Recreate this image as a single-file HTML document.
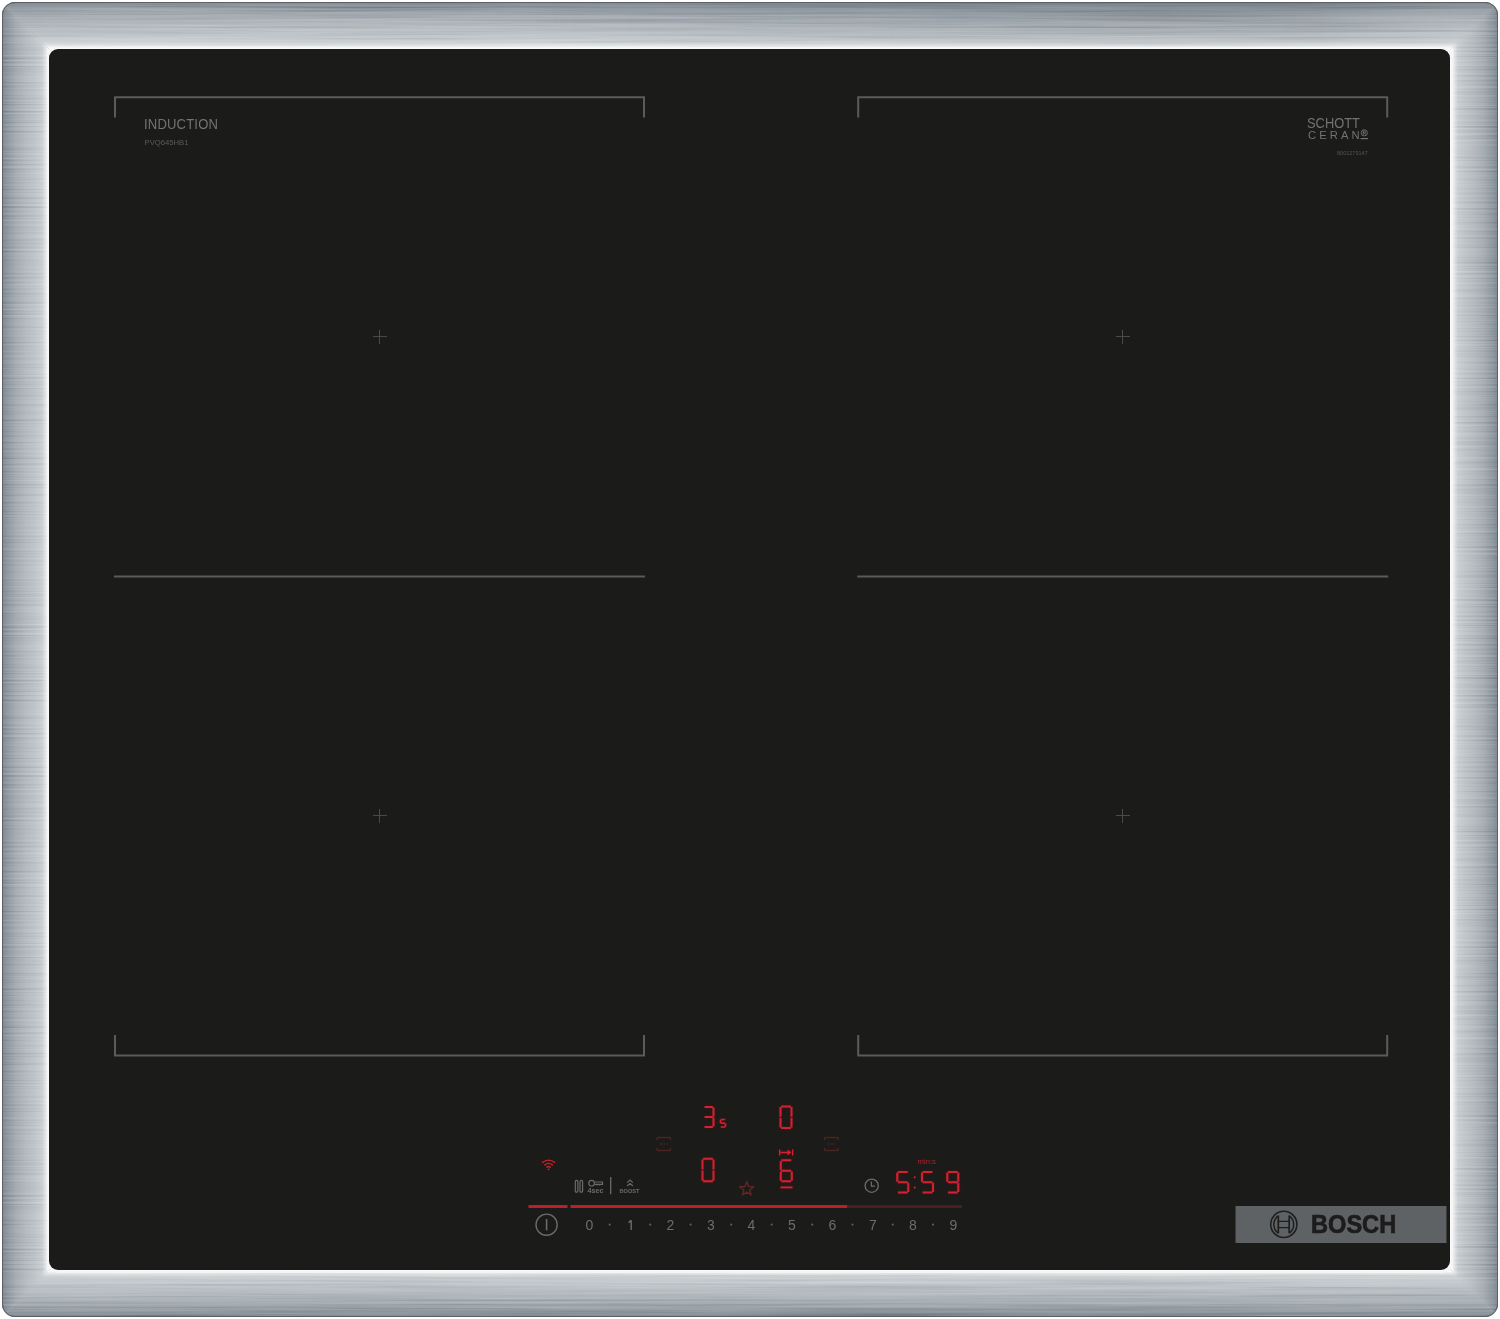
<!DOCTYPE html>
<html><head><meta charset="utf-8">
<style>
html,body{margin:0;padding:0;background:#fff;width:1500px;height:1319px;overflow:hidden;font-family:"Liberation Sans",sans-serif;}
.a{position:absolute;}
#frame{left:2px;top:2px;width:1496px;height:1315px;border-radius:13px;overflow:hidden;background:#a9b0b6;}
.st{position:absolute;}
#s-top{left:0;top:0;width:1496px;height:48px;clip-path:polygon(0 0,100% 0,calc(100% - 48px) 100%,48px 100%);
 background:linear-gradient(to bottom,#565d63 0,#868e95 1.5px,#939ba2 6px,#a6adb3 14px,#b5bbc0 24px,#c0c5c9 33px,#cbcfd3 40px,#e2e4e6 43.5px,#f5f6f6 45.5px,#fbfbfb 47.5px);}
#s-bot{left:0;top:1267px;width:1496px;height:48px;clip-path:polygon(48px 0,calc(100% - 48px) 0,100% 100%,0 100%);
 background:linear-gradient(to top,#565d63 0,#868e95 1.5px,#939ba2 6px,#a6adb3 14px,#b5bbc0 24px,#c0c5c9 33px,#cbcfd3 40px,#e2e4e6 43.5px,#f5f6f6 45.5px,#fbfbfb 47.5px);}
#s-left{left:0;top:0;width:48px;height:1315px;clip-path:polygon(0 0,100% 48px,100% calc(100% - 48px),0 100%);
 background:linear-gradient(to right,#565d63 0,#868e95 1.5px,#939ba2 6px,#a6adb3 14px,#b5bbc0 24px,#c0c5c9 33px,#cbcfd3 40px,#e2e4e6 43.5px,#f5f6f6 45.5px,#fbfbfb 47.5px);}
#s-right{left:1448px;top:0;width:48px;height:1315px;clip-path:polygon(0 48px,100% 0,100% 100%,0 calc(100% - 48px));
 background:linear-gradient(to left,#565d63 0,#868e95 1.5px,#939ba2 6px,#a6adb3 14px,#b5bbc0 24px,#c0c5c9 33px,#cbcfd3 40px,#e2e4e6 43.5px,#f5f6f6 45.5px,#fbfbfb 47.5px);}
#s-topov{left:0;top:0;width:1496px;height:48px;background:linear-gradient(to right,rgba(255,255,255,0) 0,rgba(255,255,255,.04) 8%,rgba(255,255,255,0) 35%,rgba(10,25,40,.08) 60%,rgba(10,25,40,.10) 88%,rgba(10,25,40,0) 97%);-webkit-mask-image:linear-gradient(to bottom,#000 0,#000 60%,transparent 100%);}
#edge{left:2px;top:2px;width:1494px;height:1313px;border:1px solid #596066;border-radius:13px;}
#brush{left:0;top:0;mix-blend-mode:soft-light;opacity:.8}
#panel{left:49px;top:49px;width:1401px;height:1221px;border-radius:9px;background:#1b1b19;box-shadow:0 0 0 1px rgba(250,250,250,.9);}
.ln{position:absolute;background:#646462;}
.pl{position:absolute;background:#4a4a48;}
</style></head><body>
<div id="frame" class="a">
  <div id="s-top" class="st"></div>
  <div id="s-bot" class="st"></div>
  <div id="s-left" class="st"></div>
  <div id="s-right" class="st"></div>
  <div id="s-topov" class="st"></div>
  <svg id="brush" class="a" width="1496" height="1315"><filter id="bf" x="0" y="0" width="100%" height="100%" color-interpolation-filters="sRGB"><feTurbulence type="fractalNoise" baseFrequency="0.004 0.45" numOctaves="3" seed="7"/><feColorMatrix type="matrix" values="0.33 0.33 0.33 0 0  0.33 0.33 0.33 0 0  0.33 0.33 0.33 0 0  0 0 0 0 1"/></filter><rect width="1496" height="1315" filter="url(#bf)"/></svg>
</div>
<div id="edge" class="a"></div>
<div class="a" style="left:47px;top:47px;width:1406px;height:1226px;border-radius:11px;background:#f4f5f5"></div>
<div id="panel" class="a"></div>

<!-- zone lines -->
<svg class="a" style="left:0;top:0" width="1500" height="1319" viewBox="0 0 1500 1319">
 <g fill="none" stroke="#5b5b59" stroke-width="2" stroke-linejoin="miter">
  <path d="M115 117.6V97.2H644V117.6"/>
  <path d="M858.2 117.6V97.2H1387.2V117.6"/>
  <path d="M114 576.4H645"/>
  <path d="M857.2 576.4H1388.2"/>
  <path d="M115 1035V1055.5H644V1035"/>
  <path d="M858.2 1035V1055.5H1387.2V1035"/>
 </g>
</svg>
<!-- plus marks -->
<div class="pl" style="left:373px;top:336px;width:14px;height:1px"></div>
<div class="pl" style="left:379px;top:330px;width:1px;height:14px"></div>
<div class="pl" style="left:1116px;top:336px;width:14px;height:1px"></div>
<div class="pl" style="left:1122px;top:330px;width:1px;height:14px"></div>
<div class="pl" style="left:373px;top:815px;width:14px;height:1px"></div>
<div class="pl" style="left:379px;top:809px;width:1px;height:14px"></div>
<div class="pl" style="left:1116px;top:815px;width:14px;height:1px"></div>
<div class="pl" style="left:1122px;top:809px;width:1px;height:14px"></div>


<!-- texts -->
<div class="a" style="left:144px;top:116px;font-size:14.5px;line-height:16px;color:#737371;transform:scaleX(0.9);transform-origin:0 0;white-space:nowrap;letter-spacing:0.2px">INDUCTION</div>
<div class="a" style="left:144.5px;top:137.7px;font-size:7.7px;line-height:9px;color:#5a5a58;white-space:nowrap">PVQ645HB1</div>
<div class="a" style="left:1307px;top:115px;font-size:14px;line-height:16px;color:#737371;transform:scaleX(0.92);transform-origin:0 0;white-space:nowrap">SCHOTT</div>
<div class="a" style="left:1308px;top:128.5px;font-size:11.2px;line-height:12px;color:#737371;white-space:nowrap;letter-spacing:3.1px">CERAN</div>
<div class="a" style="left:1337px;top:149.5px;font-size:6px;line-height:7px;color:#555553;white-space:nowrap;transform:scaleX(0.92);transform-origin:0 0">8001279147</div>

<!-- control panel svg -->
<svg class="a" style="left:0;top:0" width="1500" height="1319" viewBox="0 0 1500 1319">
 <defs>
  <filter id="glow" x="-50%" y="-50%" width="200%" height="200%"><feGaussianBlur stdDeviation="1.3" result="b"/><feColorMatrix in="b" type="matrix" values="0.55 0 0 0 0  0 0.2 0 0 0  0 0 0.2 0 0  0 0 0 0.55 0" result="c"/><feMerge><feMergeNode in="c"/><feMergeNode in="SourceGraphic"/></feMerge></filter>
 </defs>
 <!-- slider red line -->
 <rect x="528.5" y="1205" width="39" height="3" fill="#bd1e2a"/>
 <rect x="570.5" y="1205" width="277" height="3" fill="#bd1e2a"/>
 <rect x="847.5" y="1205" width="114.5" height="3" fill="#4a201c"/>
 <!-- bright 7-seg digits -->
 <g fill="none" stroke="#cf2230" stroke-width="2" stroke-linecap="butt" filter="url(#glow)">
  <path d="M704.6 1107.0H712.9M713.5 1107.6V1116.4M713.5 1117.6V1126.4M704.6 1127.0H712.9M704.6 1117.0H712.9"/>
  <path stroke-width="1.6" d="M720.8 1119.5H725.2M720.5 1119.8V1123.0M720.8 1123.2H725.2M725.5 1123.5V1126.7M720.8 1127.0H725.2"/>
  <path d="M781.1 1106.5H790.9M791.5 1107.1V1116.7M791.5 1117.8V1127.4M781.1 1128.0H790.9M780.5 1117.8V1127.4M780.5 1107.1V1116.7"/>
  <path d="M703.1 1158.8H712.9M713.5 1159.4V1169.5M713.5 1170.6V1180.7M703.1 1181.3H712.9M702.5 1170.6V1180.7M702.5 1159.4V1169.5"/>
  <path d="M781.4 1160.3H791.2M780.8 1160.9V1170.2M781.4 1170.8H791.2M780.8 1171.4V1180.7M791.8 1171.4V1180.7M781.4 1181.3H791.2"/>
  <path stroke-width="1.3" d="M780.5 1152.5H790.5M787.5 1150.3L790.3 1152.5L787.5 1154.7M779.6 1149.5V1155.5M792.6 1149.5V1155.5"/>
  <path stroke-width="1.8" d="M780.5 1187.4H792.5"/>
  <path stroke-width="2.1" d="M897.9 1172.0H907.7M897.3 1172.6V1181.7M897.9 1182.2H907.7M908.3 1182.8V1191.9M897.9 1192.5H907.7"/>
  <path stroke-width="2.1" d="M922.6 1172.0H932.4M922.0 1172.6V1181.7M922.6 1182.2H932.4M933.0 1182.8V1191.9M922.6 1192.5H932.4"/>
  <path stroke-width="2.1" d="M947.9 1172.0H957.7M958.3 1172.6V1181.7M958.3 1182.8V1191.9M947.9 1192.5H957.7M947.3 1172.6V1181.7M947.9 1182.2H957.7"/>
 </g>
 <circle cx="914.7" cy="1177.3" r="1.1" fill="#cf2230"/>
 <circle cx="914.7" cy="1187.6" r="1.1" fill="#cf2230"/>
 <text x="917.5" y="1164" font-family="Liberation Sans" font-size="7" fill="#b0202c" textLength="18.5" lengthAdjust="spacingAndGlyphs">min:s</text>
 <!-- wifi -->
 <g fill="none" stroke="#cc1f2a" stroke-width="1.4" stroke-linecap="round">
  <path d="M542.6 1162.6A8.5 8.5 0 0 1 554.6 1162.6"/>
  <path d="M544.8 1165A5.3 5.3 0 0 1 552.4 1165"/>
  <path d="M546.9 1167.2A2.3 2.3 0 0 1 550.3 1167.2"/>
 </g>
 <circle cx="548.6" cy="1169.3" r="0.9" fill="#cc1f2a"/>
 <!-- dim indicators -->
 <g fill="none" stroke="#4e221e" stroke-width="1.5">
  <path d="M657 1137.5H670.5M657 1150.5H670.5M657 1137.5V1140M670.5 1137.5V1140M657 1150.5V1148M670.5 1150.5V1148M660 1144H662M663.5 1144H665.5M667 1144H668"/>
  <path d="M824.5 1137.5H838M824.5 1150.5H838M824.5 1137.5V1140M838 1137.5V1140M824.5 1150.5V1148M838 1150.5V1148M827.5 1144H829.5M831 1144H833M834.5 1144H835.5"/>
  <path stroke="#5e2624" stroke-width="1.5" stroke-linejoin="round" d="M746.8 1181.8L748.6 1186.6L753.8 1186.8L749.7 1190L751.1 1195L746.8 1192.1L742.5 1195L743.9 1190L739.8 1186.8L745 1186.6Z"/>
 </g>
 <!-- gray icons -->
 <g fill="none" stroke="#6b6b69" stroke-width="1.2">
  <rect x="575.3" y="1180.4" width="2.6" height="11.8" rx="1.3"/>
  <rect x="580" y="1180.4" width="2.6" height="11.8" rx="1.3"/>
  <circle cx="591.6" cy="1183.2" r="2.8"/>
  <path d="M594.4 1182H602.5V1184.3H594.4M597 1184.3V1185.5M599.5 1184.3V1185.5"/>
  <path stroke-width="1.3" d="M610.7 1177V1194.3"/>
  <path stroke-width="1.1" d="M627.2 1182.6L630 1180L632.8 1182.6M627.2 1186L630 1183.4L632.8 1186"/>
  <circle cx="546.6" cy="1224.7" r="10.6" stroke-width="1.4"/>
  <path stroke-width="1.6" d="M546.6 1219V1230.4"/>
  <path stroke="#6d6d6b" stroke-width="1.4" d="M631.2 1220.2V1230M631.2 1220.4L628.6 1222.6"/>
  <circle cx="871.7" cy="1185.7" r="6.6" stroke-width="1.3"/>
  <path stroke-width="1.2" d="M871.4 1181.4V1186.2H875"/>
 </g>
 <text x="587.5" y="1193.2" font-family="Liberation Sans" font-weight="bold" font-size="6.6" fill="#6b6b69" textLength="16" lengthAdjust="spacingAndGlyphs">4sec</text>
 <text x="619.5" y="1193.2" font-family="Liberation Sans" font-weight="bold" font-size="6.2" fill="#6b6b69" textLength="20" lengthAdjust="spacingAndGlyphs">BOOST</text>
 <!-- slider digits -->
 <g font-family="Liberation Sans" font-size="14" fill="#6d6d6b" text-anchor="middle">
  <text x="589.5" y="1229.8">0</text>
  
  <text x="670.5" y="1229.8">2</text>
  <text x="711" y="1229.8">3</text>
  <text x="751.5" y="1229.8">4</text>
  <text x="792" y="1229.8">5</text>
  <text x="832.5" y="1229.8">6</text>
  <text x="873" y="1229.8">7</text>
  <text x="913" y="1229.8">8</text>
  <text x="953.5" y="1229.8">9</text>
 </g>
 <g fill="#5e5e5c">
  <circle cx="609.7" cy="1224.6" r="1.1"/><circle cx="650.2" cy="1224.6" r="1.1"/><circle cx="690.7" cy="1224.6" r="1.1"/>
  <circle cx="731.2" cy="1224.6" r="1.1"/><circle cx="771.7" cy="1224.6" r="1.1"/><circle cx="812.2" cy="1224.6" r="1.1"/>
  <circle cx="852.5" cy="1224.6" r="1.1"/><circle cx="892.8" cy="1224.6" r="1.1"/><circle cx="933" cy="1224.6" r="1.1"/>
 </g>
 <!-- bosch badge -->
 <rect x="1235.5" y="1206" width="211" height="37" fill="#5f6264"/>
 <g fill="none" stroke="#1e1e1e">
  <circle cx="1283.8" cy="1224.4" r="13.1" stroke-width="1.6"/>
  <path stroke-width="1.7" d="M1278.3 1215.6V1233.3M1289.2 1215.6V1233.3"/>
  <path stroke-width="1.3" d="M1278.3 1221.4H1289.2M1278.3 1227.7H1289.2"/>
  <path stroke-width="1.5" d="M1278.3 1215.8A10.66 10.66 0 0 0 1278.3 1233.2M1289.2 1215.8A10.66 10.66 0 0 1 1289.2 1233.2"/>
 </g>
</svg>
<div class="a" style="left:1311px;top:1209px;font-size:25.5px;line-height:30px;font-weight:bold;color:#1c1c1c;-webkit-text-stroke:0.7px #1c1c1c;transform:scaleX(0.925);transform-origin:0 0;white-space:nowrap">BOSCH</div>

<svg class="a" style="left:1358px;top:126px" width="14" height="16" viewBox="0 0 14 16"><g fill="none" stroke="#737371" stroke-width="0.9"><circle cx="6.3" cy="6.8" r="3.1"/><path d="M5.3 8.6V5.1H6.8A1 1 0 0 1 6.8 7H5.3M6.6 7L7.6 8.6"/><path stroke-width="1.2" d="M2.6 12.6H10"/></g></svg>
<!--CONTENT-->
</body></html>
